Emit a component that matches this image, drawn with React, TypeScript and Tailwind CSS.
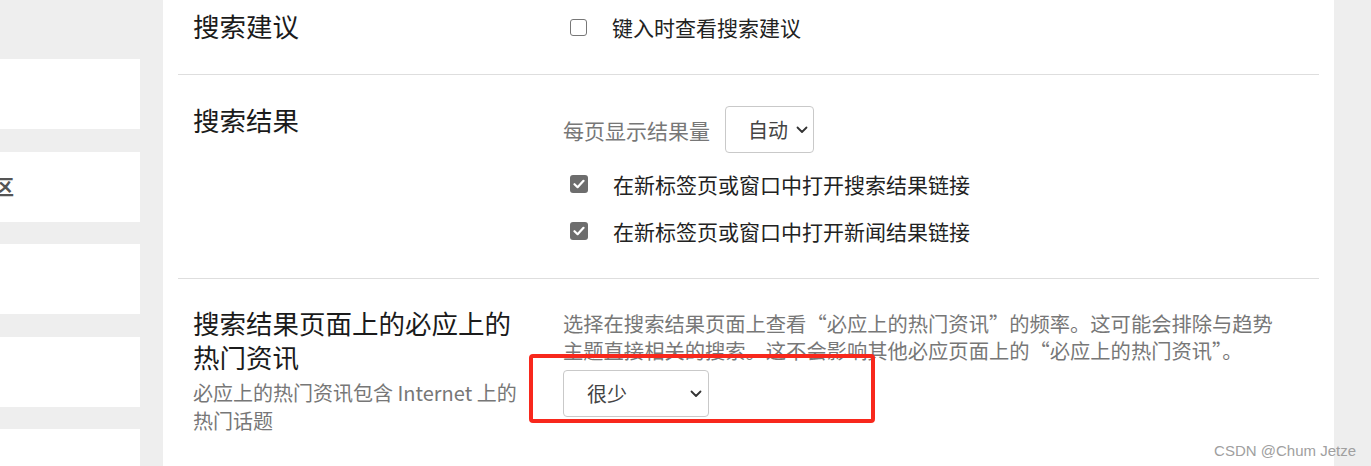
import React from "react";

const FONT = "font-['Noto_Sans_CJK_SC','Noto_Sans',sans-serif]";

function Check({ checked }: { checked?: boolean }) {
  return checked ? (
    <span className="ml-[7px] flex h-[18px] w-[18px] shrink-0 items-center justify-center rounded-[3px] bg-[#6d6d6d]">
      <svg width="12" height="10" viewBox="0 0 12 10" fill="none">
        <path d="M1.5 5.2 4.6 8.2 10.5 1.8" stroke="white" strokeWidth="2.2" strokeLinecap="round" strokeLinejoin="round" />
      </svg>
    </span>
  ) : (
    <span className="ml-[7px] h-[17px] w-[17px] shrink-0 rounded-[3px] border border-[#777] bg-white" />
  );
}

function Chevron() {
  return (
    <svg width="12" height="8" viewBox="0 0 12 8" fill="none">
      <path d="M1.5 1.5 6 6 10.5 1.5" stroke="#333" strokeWidth="1.8" strokeLinecap="round" strokeLinejoin="round" />
    </svg>
  );
}

function CheckRow({ label, checked }: { label: string; checked?: boolean }) {
  return (
    <div className="flex h-[28px] items-center gap-[25px]">
      <Check checked={checked} />
      <span className="text-[21px] leading-[28px] text-[#222]">{label}</span>
    </div>
  );
}

export default function App() {
  return (
    <div className={`relative flex h-[466px] w-[1371px] overflow-hidden bg-[#eeeeee] ${FONT}`}>
      {/* left nav cards, scrolled out to the left */}
      <div className="flex w-[163px] shrink-0 flex-col gap-[22.5px] pt-[59px]">
        <div className="h-[70px] w-[140px] shrink-0 bg-white" />
        <div className="flex h-[70px] w-[140px] shrink-0 items-center overflow-hidden bg-white">
          <span className="-ml-[6px] text-[20px] font-bold text-[#555]">区</span>
        </div>
        <div className="h-[70px] w-[140px] shrink-0 bg-white" />
        <div className="h-[70px] w-[140px] shrink-0 bg-white" />
        <div className="h-[70px] w-[140px] shrink-0 bg-white" />
      </div>

      <div className="w-[1171px] shrink-0 bg-white px-[15px]">
        <section className="flex h-[75px] border-b border-[#dedede]">
          <div className="w-[385px] shrink-0 pl-[15px] pt-[9px]">
            <h2 className="text-[26.5px] font-normal leading-[34px] text-[#1b1b1b]">搜索建议</h2>
          </div>
          <div className="pt-[13px]">
            <CheckRow label="键入时查看搜索建议" />
          </div>
        </section>

        <section className="flex h-[204px] border-b border-[#dedede]">
          <div className="w-[385px] shrink-0 pl-[15px] pt-[28px]">
            <h2 className="text-[26.5px] font-normal leading-[34px] text-[#1b1b1b]">搜索结果</h2>
          </div>
          <div className="flex flex-col pt-[31px]">
            <div className="flex items-center gap-[15px]">
              <span className="text-[21px] leading-[28px] text-[#777]">每页显示结果量</span>
              <div className="flex h-[47px] w-[89px] items-center rounded-[4px] border border-[#c9c9c9] pl-[22px] pr-[5px]">
                <span className="text-[20px] text-[#444]">自动</span>
                <span className="ml-auto"><Chevron /></span>
              </div>
            </div>
            <div className="mt-[17px] flex flex-col gap-[19px]">
              <CheckRow label="在新标签页或窗口中打开搜索结果链接" checked />
              <CheckRow label="在新标签页或窗口中打开新闻结果链接" checked />
            </div>
          </div>
        </section>

        <section className="flex">
          <div className="w-[385px] shrink-0 pl-[15px] pt-[27px]">
            <div className="max-w-[335px]">
              <h2 className="text-[26.5px] font-normal leading-[34px] text-[#1b1b1b]">搜索结果页面上的必应上的热门资讯</h2>
              <p className="mt-[5px] text-[20px] leading-[28px] text-[#777]">必应上的热门资讯包含 Internet 上的热门话题</p>
            </div>
          </div>
          <div className="pt-[31px]">
            <p className="max-w-[725px] text-[20.3px] leading-[27px] text-[#777]">
              选择在搜索结果页面上查看“必应上的热门资讯”的频率。这可能会排除与趋势主题直接相关的搜索。这不会影响其他必应页面上的“必应上的热门资讯”。
            </p>
            <div className="mt-[6px] flex h-[47px] w-[146px] items-center rounded-[4px] border border-[#c9c9c9] pl-[23px] pr-[6px]">
              <span className="text-[20px] text-[#444]">很少</span>
              <span className="ml-auto"><Chevron /></span>
            </div>
          </div>
        </section>
      </div>

      {/* annotation box drawn over the page */}
      <div className="absolute left-[529px] top-[354px] h-[69px] w-[346px] rounded-[4px] border-[4px] border-[#f8281c]" />
      <span className="absolute right-[15px] top-[440px] font-['Liberation_Sans',sans-serif] text-[15px] text-[#a0a0a0]">
        CSDN @Chum Jetze
      </span>
    </div>
  );
}
